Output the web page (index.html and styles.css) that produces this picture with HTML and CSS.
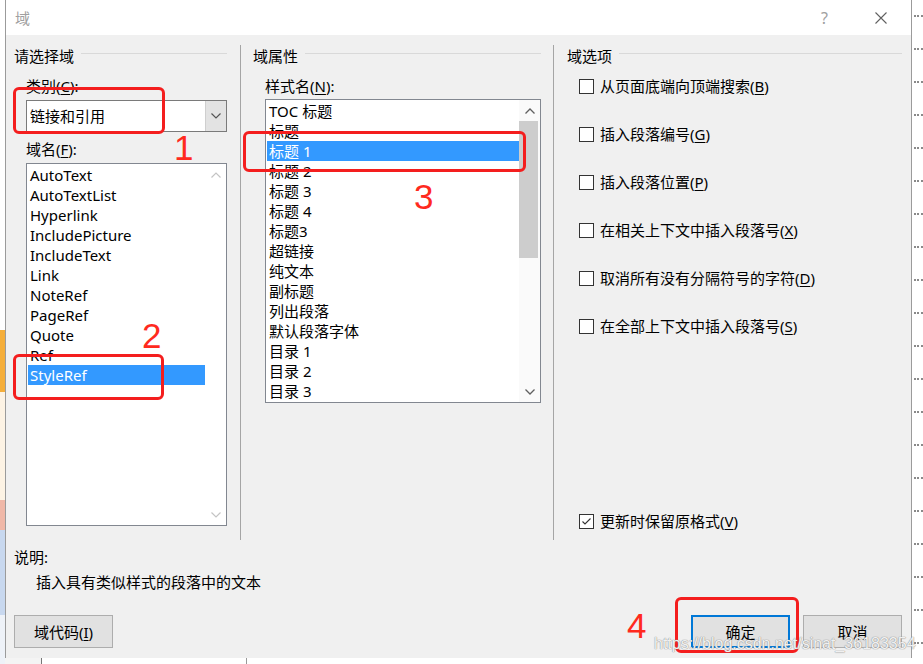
FILE: index.html
```html
<!DOCTYPE html>
<html lang="zh-CN">
<head>
<meta charset="utf-8">
<title>域</title>
<link rel="stylesheet" href="styles.css">
</head>
<body>
<div class="screen">
  <div class="edge-left"></div>
  <div class="center-col">
    <div class="dialog">
      <div class="titlebar">
        <span class="title">域</span>
        <span class="help">?</span>
        <svg class="close" width="12" height="12" viewBox="0 0 12 12"><path d="M0.5 0.5 L11.5 11.5 M11.5 0.5 L0.5 11.5" stroke="#606060" stroke-width="1.1" fill="none"/></svg>
      </div>
      <div class="groups">
        <section class="group g-left">
          <div class="ghead">请选择域</div>
          <div class="label">类别(<u>C</u>):</div>
          <div class="combo">
            <div class="combo-text">链接和引用</div>
            <div class="combo-btn"><svg width="10" height="6" viewBox="0 0 10 6"><polyline points="0.5,0.5 5,5 9.5,0.5" fill="none" stroke="#555" stroke-width="1.2"/></svg></div>
          </div>
          <div class="label label2">域名(<u>F</u>):</div>
          <div class="list list-left">
            <div class="items">
              <div class="item">AutoText</div>
              <div class="item">AutoTextList</div>
              <div class="item">Hyperlink</div>
              <div class="item">IncludePicture</div>
              <div class="item">IncludeText</div>
              <div class="item">Link</div>
              <div class="item">NoteRef</div>
              <div class="item">PageRef</div>
              <div class="item">Quote</div>
              <div class="item">Ref</div>
              <div class="item sel">StyleRef</div>
            </div>
            <div class="scroll scroll-off">
              <div class="sb-btn"><svg width="10" height="6" viewBox="0 0 10 6"><polyline points="0.5,5.5 5,1 9.5,5.5" fill="none" stroke="#c4c4c4" stroke-width="1.2"/></svg></div>
              <div class="sb-track"></div>
              <div class="sb-btn"><svg width="10" height="6" viewBox="0 0 10 6"><polyline points="0.5,0.5 5,5 9.5,0.5" fill="none" stroke="#c4c4c4" stroke-width="1.2"/></svg></div>
            </div>
          </div>
        </section>
        <section class="group g-mid">
          <div class="ghead">域属性</div>
          <div class="label">样式名(<u>N</u>):</div>
          <div class="list list-mid">
            <div class="items">
              <div class="item">TOC 标题</div>
              <div class="item">标题</div>
              <div class="item sel">标题 1</div>
              <div class="item">标题 2</div>
              <div class="item">标题 3</div>
              <div class="item">标题 4</div>
              <div class="item">标题3</div>
              <div class="item">超链接</div>
              <div class="item">纯文本</div>
              <div class="item">副标题</div>
              <div class="item">列出段落</div>
              <div class="item">默认段落字体</div>
              <div class="item">目录 1</div>
              <div class="item">目录 2</div>
              <div class="item">目录 3</div>
            </div>
            <div class="scroll">
              <div class="sb-btn"><svg width="10" height="6" viewBox="0 0 10 6"><polyline points="0.5,5.5 5,1 9.5,5.5" fill="none" stroke="#606060" stroke-width="1.3"/></svg></div>
              <div class="sb-track"><div class="thumb"></div></div>
              <div class="sb-btn"><svg width="10" height="6" viewBox="0 0 10 6"><polyline points="0.5,0.5 5,5 9.5,0.5" fill="none" stroke="#606060" stroke-width="1.3"/></svg></div>
            </div>
          </div>
        </section>
        <section class="group g-right">
          <div class="ghead">域选项</div>
          <div class="opts">
            <div class="opt"><span class="cb"></span>从页面底端向顶端搜索(<u>B</u>)</div>
            <div class="opt"><span class="cb"></span>插入段落编号(<u>G</u>)</div>
            <div class="opt"><span class="cb"></span>插入段落位置(<u>P</u>)</div>
            <div class="opt"><span class="cb"></span>在相关上下文中插入段落号(<u>X</u>)</div>
            <div class="opt"><span class="cb"></span>取消所有没有分隔符号的字符(<u>D</u>)</div>
            <div class="opt"><span class="cb"></span>在全部上下文中插入段落号(<u>S</u>)</div>
            <div class="opt opt-last"><span class="cb"><svg width="13" height="13" viewBox="0 0 13 13"><polyline points="2.5,6.5 5,9 10.5,3.5" fill="none" stroke="#333" stroke-width="1.1"/></svg></span>更新时保留原格式(<u>V</u>)</div>
          </div>
        </section>
      </div>
      <div class="desc-label">说明:</div>
      <div class="desc-text">插入具有类似样式的段落中的文本</div>
      <div class="buttons">
        <div class="btn btn-code">域代码(<u>I</u>)</div>
        <div class="btn btn-ok">确定</div>
        <div class="btn">取消</div>
      </div>
    </div>
    <div class="peek">
      <div class="peek-a"></div>
      <div class="peek-b"><span class="peek-text">目录</span></div>
    </div>
  </div>
  <div class="edge-right">
    <span class="dots"></span><span class="dots"></span><span class="dots"></span><span class="dots"></span>
    <span class="dots"></span><span class="dots"></span><span class="dots"></span><span class="dots"></span>
    <span class="dots"></span><span class="dots"></span><span class="dots"></span><span class="dots"></span>
    <span class="dots"></span><span class="dots"></span><span class="dots"></span><span class="dots"></span>
    <span class="dots"></span><span class="dots"></span><span class="dots"></span><span class="dots"></span>
  </div>

  <div class="mark mark1"></div>
  <div class="num num1">1</div>
  <div class="mark mark2"></div>
  <div class="num num2">2</div>
  <div class="mark mark3"></div>
  <div class="num num3">3</div>
  <div class="mark mark4"></div>
  <div class="num num4">4</div>
  <div class="watermark">https://blog.csdn.net/sinat_36183354</div>
</div>
</body>
</html>
```

FILE: styles.css
```css
* { box-sizing: border-box; }

body {
  margin: 0;
  background: #fff;
  font-family: "Noto Sans", "Noto Sans CJK SC", sans-serif;
  font-size: 15px;
  line-height: 20px;
  color: #000;
}

u { text-decoration: underline; text-underline-offset: 2px; text-decoration-thickness: 1px; }

.screen {
  position: relative;
  width: 923px;
  height: 664px;
  overflow: hidden;
  display: flex;
  background: #fff;
}

.edge-left {
  width: 5px;
  flex: none;
  background: linear-gradient(to bottom, #fff 0 330px, #f5ae3a 330px 392px, #fdf3e4 392px 500px, #f0b8a8 500px 530px, #c8d8ef 530px 615px, #eef2f8 615px);
}

.center-col {
  width: 907px;
  flex: none;
  display: flex;
  flex-direction: column;
}

.dialog {
  height: 658px;
  flex: none;
  border-left: 1px solid #9b9b9b;
  border-right: 1px solid #9b9b9b;
  background: #f0f0f0;
  display: flex;
  flex-direction: column;
}

.titlebar {
  height: 35px;
  flex: none;
  background: #fff;
  display: flex;
  align-items: center;
  padding-left: 9px;
}
.title { flex: 1; color: #a0a0a0; }
.help { color: #a0a0a0; font-size: 16px; margin-right: 47px; }
.close { margin-right: 24px; }

.groups {
  display: flex;
  margin-top: 10px;
  height: 495px;
  flex: none;
}

.group {
  display: flex;
  flex-direction: column;
  padding-top: 1px;
}
.g-left { width: 235px; border-right: 1px solid #a5a5a5; padding-left: 20px; padding-right: 13px; }
.g-mid { width: 313px; border-right: 1px solid #a5a5a5; padding-left: 24px; padding-right: 12px; }
.g-right { flex: 1; padding-left: 25px; padding-right: 9px; }

.ghead {
  display: flex;
  height: 20px;
  margin-left: -12px;
  white-space: nowrap;
}
.ghead::after {
  content: "";
  flex: 1;
  height: 1px;
  background: #d9d9d9;
  margin-left: 7px;
  margin-top: 7px;
}

.label { margin-top: 10px; }
.label2 { margin-top: 7px; }

.combo {
  margin-top: 4px;
  height: 32px;
  border: 1px solid #7a7a7a;
  background: #fff;
  display: flex;
}
.combo-text { flex: 1; padding-left: 3px; line-height: 30px; }
.combo-btn {
  width: 21px;
  background: #e3e3e3;
  border-left: 1px solid #cfcfcf;
  display: flex;
  align-items: center;
  justify-content: center;
}

.list {
  margin-top: 4px;
  border: 1px solid #828790;
  background: #fff;
  display: flex;
}
.list-left { height: 363px; }
.list-mid { margin-top: 3px; height: 304px; }

.items { flex: 1; padding-top: 1px; min-width: 0; }
.item {
  height: 20px;
  margin-left: 1px;
  padding-left: 2px;
  white-space: nowrap;
}
.item.sel { background: #3399ff; color: #fff; }

.scroll {
  width: 21px;
  flex: none;
  display: flex;
  flex-direction: column;
  background: #fafafa;
}
.scroll-off { background: #fff; }
.sb-btn {
  height: 21px;
  flex: none;
  display: flex;
  align-items: center;
  justify-content: center;
}
.sb-track { flex: 1; padding: 0 2px 0 0; }
.thumb { height: 137px; background: #cdcdcd; }

.opts {
  flex: 1;
  display: flex;
  flex-direction: column;
  gap: 28px;
  margin-top: 10px;
}
.opt {
  height: 20px;
  display: flex;
  align-items: center;
  white-space: nowrap;
}
.opt-last { margin-top: auto; margin-bottom: 9px; }
.cb {
  width: 15px;
  height: 15px;
  border: 1px solid #333;
  background: #fff;
  margin-right: 6px;
  flex: none;
  display: flex;
}

.desc-label { margin-top: 7px; padding-left: 8px; }
.desc-text { margin-top: 5px; padding-left: 30px; }

.buttons {
  margin-top: 23px;
  display: flex;
  gap: 13px;
  padding: 0 9px 0 8px;
}
.btn {
  width: 99px;
  height: 33px;
  background: #e1e1e1;
  border: 1px solid #adadad;
  display: flex;
  align-items: center;
  justify-content: center;
}
.btn-code { margin-right: auto; }
.btn-ok { border: 2px solid #0078d7; }

.peek {
  flex: 1;
  display: flex;
  overflow: hidden;
}
.peek-a { width: 37px; background: #f4f4f4; border-right: 1px solid #777; }
.peek-b { width: 205px; border-right: 1px solid #999; overflow: hidden; padding-left: 80px; }
.peek-text { display: block; margin-top: 2px; font-size: 15px; line-height: 20px; color: #333; }

.edge-right {
  flex: 1;
  display: flex;
  flex-direction: column;
  padding-top: 15px;
  gap: 31px;
  padding-left: 2px;
}
.dots { display: block; height: 0; border-top: 2px dotted #8a8a8a; }

.mark {
  position: absolute;
  border: 3px solid #f41e1e;
  border-radius: 6px;
}
.mark1 { left: 13px; top: 87px; width: 152px; height: 47px; }
.mark2 { left: 13px; top: 354px; width: 151px; height: 46px; }
.mark3 { left: 243px; top: 131px; width: 283px; height: 41px; }
.mark4 { left: 675px; top: 597px; width: 124px; height: 56px; }

.num {
  position: absolute;
  font-family: "Liberation Sans", Arial, sans-serif;
  font-size: 35px;
  line-height: 35px;
  color: #ff2a1e;
}
.num1 { left: 174px; top: 130px; }
.num2 { left: 142px; top: 318px; }
.num3 { left: 414px; top: 179px; }
.num4 { left: 627px; top: 608px; }

.watermark {
  position: absolute;
  left: 654px;
  top: 635px;
  font-family: "Liberation Sans", Arial, sans-serif;
  font-size: 16px;
  line-height: 18px;
  color: rgba(255, 255, 255, 0.9);
  text-shadow: 0 0 1px #8c8c8c, 0 0 1px #8c8c8c;
  white-space: nowrap;
}
```
